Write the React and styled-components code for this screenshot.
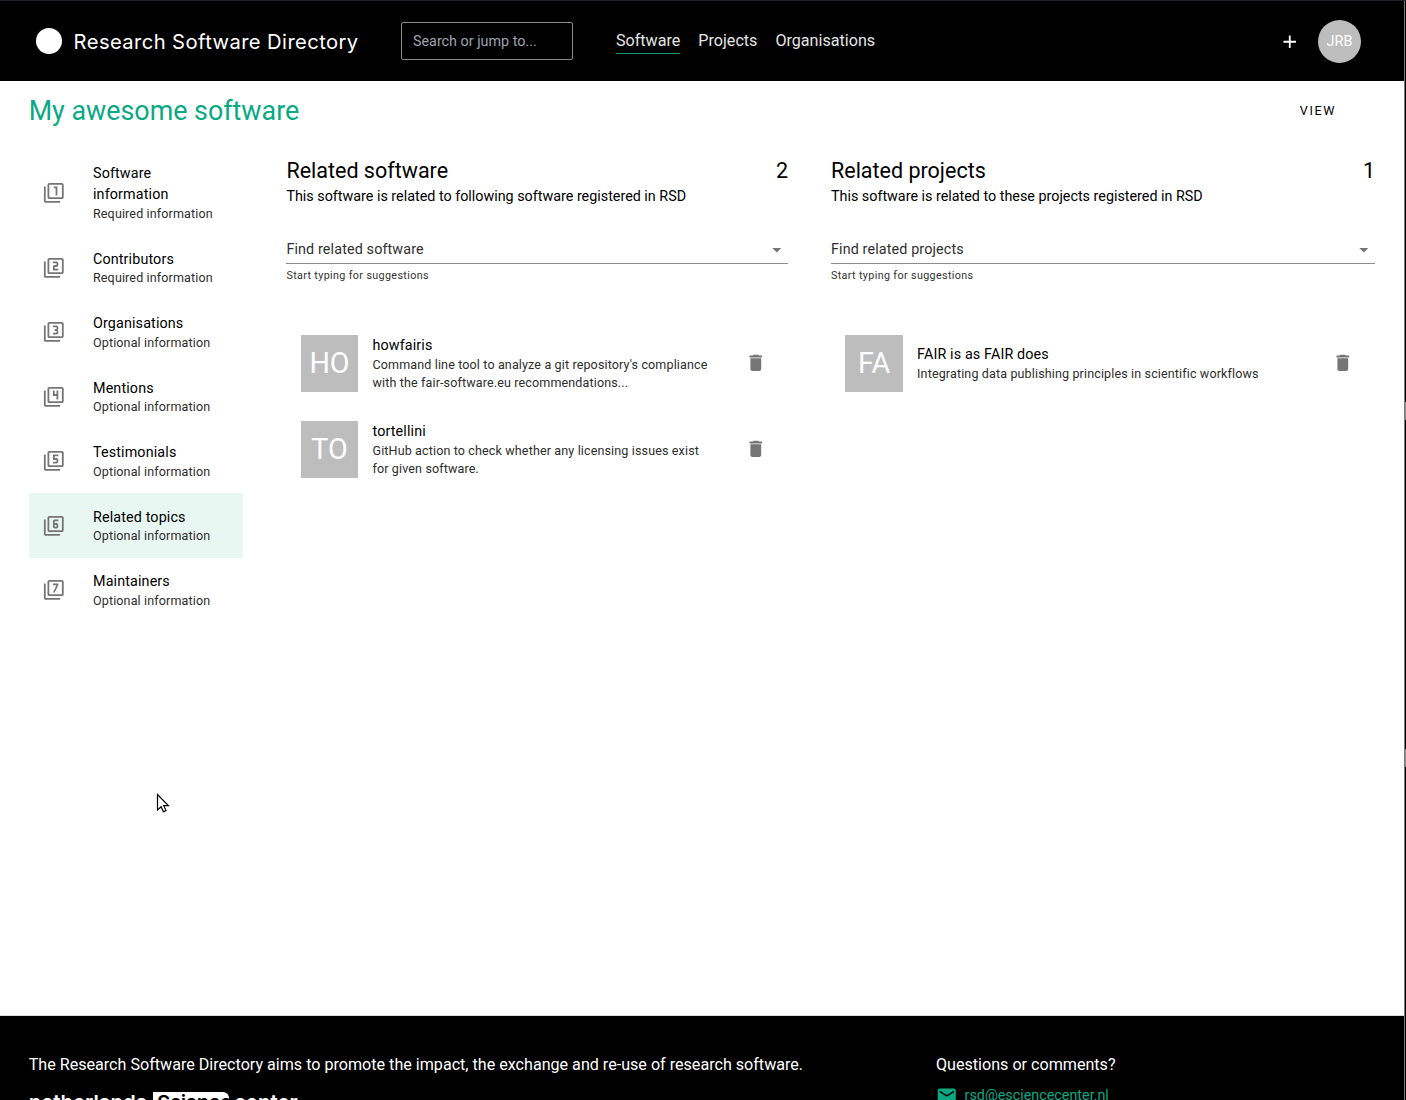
import React from "react";
import styled, { createGlobalStyle } from "styled-components";
import {
  MdFilter1, MdFilter2, MdFilter3, MdFilter4, MdFilter5, MdFilter6, MdFilter7,
  MdDelete, MdArrowDropDown, MdAdd, MdEmail,
} from "react-icons/md";

const Global = createGlobalStyle`
  *, *::before, *::after { box-sizing: border-box; }
  body { margin: 0; background: #fff; color: #000; font-family: Roboto, "Liberation Sans", sans-serif; }
  h1, h2, p { margin: 0; font-weight: 400; }
`;

const Frame = styled.div`
  display: flex;
  width: 1406px;
  height: 1100px;
  overflow: hidden;
  border-top: 1px solid #23232c;
`;
const Page = styled.div`
  flex: 1;
  min-width: 0;
  display: flex;
  flex-direction: column;
`;
const WindowEdge = styled.div`
  width: 2px;
  border-left: 1px solid #77797a;
  background: #000;
  padding-top: 401px;
  display: flex;
  flex-direction: column;
  gap: 329px;
`;
const EdgeMark = styled.span`
  height: 18px;
  background: #8f8f8f;
`;

const Header = styled.header`
  flex: none;
  height: 80px;
  background: #000;
  color: #fff;
  display: flex;
  align-items: center;
  padding: 0 43px 0 36px;
`;
const LogoMark = styled.span`
  flex: none;
  width: 26px;
  height: 26px;
  border-radius: 50%;
  background: #fff;
`;
const LogoText = styled.span`
  flex: none;
  width: 339px;
  padding: 1px 0 0 11.6px;
  font: 400 20.2px/28px Inter, sans-serif;
  letter-spacing: 0.41px;
  white-space: nowrap;
`;
const SearchBox = styled.input`
  width: 172px;
  height: 38px;
  padding: 0 11px;
  border: 1px solid #8a8a8a;
  border-radius: 2px;
  background: transparent;
  font: 400 14.33px/20px Roboto, sans-serif;
  &::placeholder { color: #9ca3af; opacity: 1; }
`;
const Nav = styled.nav`
  display: flex;
  gap: 18px;
  margin-left: 43px;
  flex: 1;
`;
const NavLink = styled.a`
  font-size: 16.13px;
  line-height: 25px;
  height: 26px;
  color: #e5e5e5;
  border-bottom: 1px solid ${(p) => (p.$active ? "#129577" : "transparent")};
`;
const AddButton = styled.span`
  display: flex;
  font-size: 21.5px;
  margin: 1px 18px 0 0;
`;
const Avatar = styled.span`
  width: 43px;
  height: 43px;
  border-radius: 50%;
  background: #bdbdbd;
  color: #fff;
  display: grid;
  place-items: center;
  font-size: 14.4px;
`;

const TitleBar = styled.div`
  flex: none;
  height: 60px;
  padding: 0 68px 0 28.7px;
  display: flex;
  align-items: center;
  justify-content: space-between;
`;
const PageTitle = styled.h1`
  font-size: 26.85px;
  line-height: 36px;
  color: #09a983;
`;
const ViewButton = styled.a`
  font-size: 12.6px;
  line-height: 22px;
  letter-spacing: 1.6px;
`;

const Content = styled.main`
  flex: none;
  height: 875px;
  display: grid;
  grid-template-columns: 214.4px 501.6px 544px;
  column-gap: 43px;
  padding: 8px 30px 0 29px;
  border-bottom: 1px solid #d9dcdb;
`;
const Steps = styled.nav`
  display: flex;
  flex-direction: column;
  padding-top: 0.5px;
`;
const Step = styled.a`
  display: flex;
  align-items: center;
  padding: 12.6px 14.4px;
  background: ${(p) => (p.$active ? "#e9f7f3" : "transparent")};
`;
const StepIcon = styled.span`
  display: flex;
  flex: none;
  width: 49.6px;
  font-size: 21.6px;
  color: #757575;
`;
const Primary = styled.div`
  font-size: 14.33px;
  line-height: ${(p) => (p.$tight ? "19.4px" : "21.4px")};
  padding-top: ${(p) => (p.$tight ? "0" : "0.5px")};
  margin-bottom: ${(p) => (p.$tight ? "0.6px" : "-0.5px")};
  letter-spacing: 0.134px;
`;
const Secondary = styled.div`
  font-size: 12.54px;
  line-height: 17.9px;
  letter-spacing: 0.134px;
  color: #2e2e2e;
`;

const Column = styled.section`
  padding-top: 7px;
`;
const ColumnHead = styled.div`
  display: flex;
  justify-content: space-between;
`;
const ColumnTitle = styled.h2`
  font-size: 21.5px;
  line-height: 29px;
`;
const Intro = styled.p`
  padding-top: 1px;
  font-size: 14.33px;
  line-height: 21px;
`;
const Field = styled.div`
  display: flex;
  align-items: center;
  justify-content: space-between;
  margin-top: 29px;
  height: 28px;
  border-bottom: 1px solid #8c8c8c;
  font-size: 14.33px;
  line-height: 21px;
  padding-bottom: 1px;
  letter-spacing: 0.134px;
  color: #303030;
  svg { font-size: 21.6px; color: #757575; margin-top: 2px; }
`;
const Helper = styled.p`
  margin-top: 3px;
  font-size: 10.75px;
  line-height: 18px;
  letter-spacing: 0.358px;
  color: #333;
`;
const Items = styled.div`
  display: flex;
  flex-direction: column;
  gap: 15px;
  margin-top: 43px;
`;
const Item = styled.article`
  display: flex;
  align-items: center;
  height: 71px;
  padding: 0 21px 0 14.4px;
  > svg { flex: none; font-size: 21.6px; color: #757575; margin-bottom: 1.4px; }
`;
const Thumb = styled.div`
  flex: none;
  width: 57.4px;
  height: 57px;
  display: grid;
  place-items: center;
  padding-bottom: 2px;
  background: #bdbdbd;
  color: #fff;
  font-size: 28.7px;
`;
const ItemText = styled.div`
  flex: 1;
  padding: 0.6px 36px 0 14.3px;
`;

const Footer = styled.footer`
  flex: 1;
  min-height: 0;
  overflow: hidden;
  background: #000;
  color: #fff;
  display: grid;
  grid-template-columns: 907.3px 1fr;
  padding: 36px 29px 0 28.7px;
  font-size: 16.13px;
  line-height: 25px;
`;
const Partner = styled.div`
  display: flex;
  gap: 5px;
  margin-top: 15px;
  font: 600 20.4px/22px Inter, sans-serif;
`;
const PartnerName = styled.span`
  width: 119.3px;
`;
const PartnerBox = styled.span`
  background: #fff;
  color: #000;
  width: 76px;
  padding-left: 4px;
  letter-spacing: -0.7px;
  border-radius: 0 6px 0 0;
`;
const Mail = styled.a`
  display: flex;
  align-items: center;
  gap: 7px;
  margin-top: 7px;
  font-size: 14.33px;
  line-height: 23px;
  color: #09a983;
  svg { font-size: 21.6px; }
`;
const Pointer = styled.svg`
  position: absolute;
  left: 156px;
  top: 793px;
`;

const steps = [
  [MdFilter1, "Software information", "Required information"],
  [MdFilter2, "Contributors", "Required information"],
  [MdFilter3, "Organisations", "Optional information"],
  [MdFilter4, "Mentions", "Optional information"],
  [MdFilter5, "Testimonials", "Optional information"],
  [MdFilter6, "Related topics", "Optional information"],
  [MdFilter7, "Maintainers", "Optional information"],
];

const columns = [
  {
    title: "Related software",
    intro: "This software is related to following software registered in RSD",
    label: "Find related software",
    items: [
      ["HO", "howfairis", "Command line tool to analyze a git repository's compliance with the fair-software.eu recommendations..."],
      ["TO", "tortellini", "GitHub action to check whether any licensing issues exist for given software."],
    ],
  },
  {
    title: "Related projects",
    intro: "This software is related to these projects registered in RSD",
    label: "Find related projects",
    items: [["FA", "FAIR is as FAIR does", "Integrating data publishing principles in scientific workflows"]],
  },
];

function RelatedColumn({ title, intro, label, items }) {
  return (
    <Column>
      <ColumnHead>
        <ColumnTitle>{title}</ColumnTitle>
        <ColumnTitle as="span">{items.length}</ColumnTitle>
      </ColumnHead>
      <Intro>{intro}</Intro>
      <Field>
        {label}
        <MdArrowDropDown />
      </Field>
      <Helper>Start typing for suggestions</Helper>
      <Items>
        {items.map(([initials, name, text]) => (
          <Item key={name}>
            <Thumb>{initials}</Thumb>
            <ItemText>
              <Primary $tight>{name}</Primary>
              <Secondary>{text}</Secondary>
            </ItemText>
            <MdDelete />
          </Item>
        ))}
      </Items>
    </Column>
  );
}

export default function App() {
  return (
    <>
      <Global />
      <Frame>
        <Page>
          <Header>
            <LogoMark />
            <LogoText>Research Software Directory</LogoText>
            <SearchBox placeholder="Search or jump to..." />
            <Nav>
              <NavLink $active>Software</NavLink>
              <NavLink>Projects</NavLink>
              <NavLink>Organisations</NavLink>
            </Nav>
            <AddButton><MdAdd /></AddButton>
            <Avatar>JRB</Avatar>
          </Header>
          <TitleBar>
            <PageTitle>My awesome software</PageTitle>
            <ViewButton>VIEW</ViewButton>
          </TitleBar>
          <Content>
            <Steps>
              {steps.map(([Icon, name, note], i) => (
                <Step key={name} $active={i === 5}>
                  <StepIcon><Icon /></StepIcon>
                  <div>
                    <Primary>{name}</Primary>
                    <Secondary>{note}</Secondary>
                  </div>
                </Step>
              ))}
            </Steps>
            {columns.map((c) => <RelatedColumn key={c.title} {...c} />)}
          </Content>
          <Footer>
            <div>
              <p>The Research Software Directory aims to promote the impact, the exchange and re-use of research software.</p>
              <Partner>
                <PartnerName>netherlands</PartnerName>
                <PartnerBox>Science</PartnerBox>
                <span>center</span>
              </Partner>
            </div>
            <div>
              <p>Questions or comments?</p>
              <Mail><MdEmail />rsd@esciencecenter.nl</Mail>
            </div>
          </Footer>
        </Page>
        <WindowEdge>
          <EdgeMark />
          <EdgeMark />
        </WindowEdge>
      </Frame>
      <Pointer width="14" height="21" viewBox="0 0 14 21">
        <path d="M1.5 1.5V17l3.6-3.3 2.3 5 2.6-1.1-2.3-5H12.4z" fill="#fff" stroke="#000" strokeWidth="1.2" />
      </Pointer>
    </>
  );
}
